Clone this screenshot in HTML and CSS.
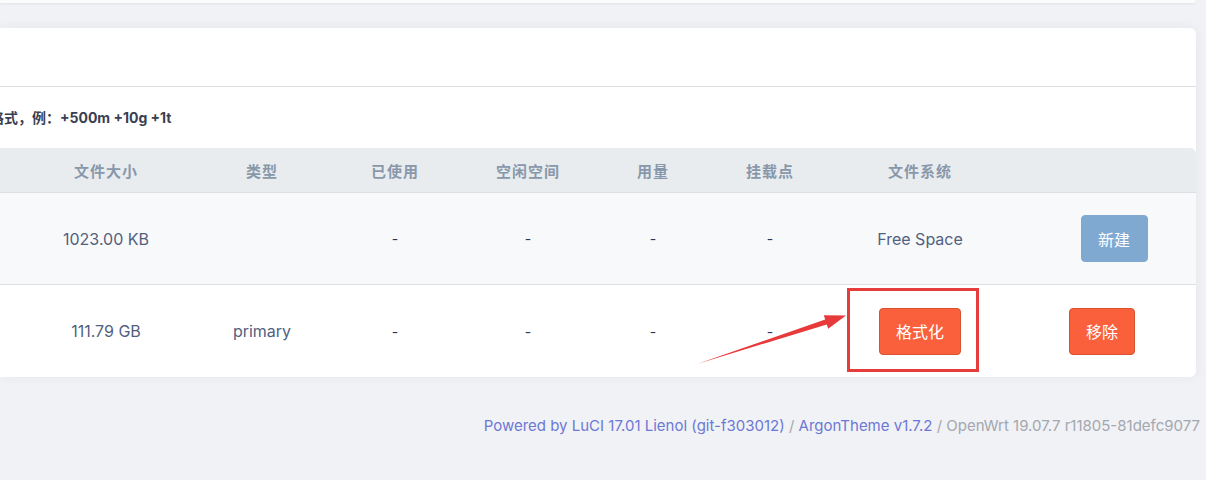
FILE: index.html
```html
<!DOCTYPE html>
<html lang="zh-CN">
<head>
<meta charset="utf-8">
<link rel="stylesheet" href="styles.css">
</head>
<body>
<div class="top-card"></div>
<div class="card">
  <div class="card-title"></div>
  <div class="card-desc"><span class="desc-text">格式，例：+500m +10g +1t</span></div>
  <div class="table">
    <div class="row head">
      <div class="c c-dev"></div>
      <div class="c c-size">文件大小</div>
      <div class="c c-type">类型</div>
      <div class="c c-used">已使用</div>
      <div class="c c-free">空闲空间</div>
      <div class="c c-usage">用量</div>
      <div class="c c-mount">挂载点</div>
      <div class="c c-fs">文件系统</div>
      <div class="c c-act"></div>
    </div>
    <div class="row data alt">
      <div class="c c-dev"></div>
      <div class="c c-size">1023.00 KB</div>
      <div class="c c-type"></div>
      <div class="c c-used dash">-</div>
      <div class="c c-free dash">-</div>
      <div class="c c-usage dash">-</div>
      <div class="c c-mount dash">-</div>
      <div class="c c-fs">Free Space</div>
      <div class="c c-act"><button class="btn btn-new">新建</button></div>
    </div>
    <div class="row data">
      <div class="c c-dev"></div>
      <div class="c c-size">111.79 GB</div>
      <div class="c c-type">primary</div>
      <div class="c c-used dash">-</div>
      <div class="c c-free dash">-</div>
      <div class="c c-usage dash">-</div>
      <div class="c c-mount dash">-</div>
      <div class="c c-fs"><button class="btn btn-danger btn-format">格式化</button></div>
      <div class="c c-act"><button class="btn btn-danger btn-remove">移除</button></div>
    </div>
  </div>
  <div class="mark-box"></div>
</div>
<footer class="footer">
  <a class="link">Powered by LuCI 17.01 Lienol (git-f303012)</a> / <a class="link">ArgonTheme v1.7.2</a> / OpenWrt 19.07.7 r11805-81defc9077
</footer>
<svg class="arrow" width="1206" height="480" viewBox="0 0 1206 480">
  <polygon points="697,364 825.2,319.6 823.8,315.3 846,315.5 828.2,328.7 826.8,324.4" fill="#e8393b"/>
</svg>
</body>
</html>
```

FILE: styles.css
```css
* { box-sizing: border-box; }
html, body { margin: 0; padding: 0; }
body {
  width: 1206px;
  height: 480px;
  overflow: hidden;
  background: #f1f2f5;
  font-family: Inter, "Noto Sans CJK SC", sans-serif;
  color: #525f7f;
  position: relative;
}
.top-card {
  width: 1196px;
  height: 3px;
  background: #fbfbfc;
  border-bottom-right-radius: 5px;
  box-shadow: 0 1px 3px rgba(50, 50, 93, 0.08);
}
.card {
  position: relative;
  margin-top: 25px;
  width: 1196px;
  height: 349px;
  background: #fff;
  border-radius: 0 6px 6px 0;
  box-shadow: 0 0 12px rgba(50, 50, 93, 0.06);
  overflow: hidden;
}
.card-title {
  height: 59px;
  border-bottom: 1px solid #dcdde0;
}
.card-desc {
  height: 61px;
  display: flex;
  align-items: center;
  overflow: hidden;
}
.desc-text {
  margin-left: -10px;
  padding-bottom: 2px;
  font-size: 14px;
  font-weight: 700;
  color: #3a3f51;
  font-family: Inter, "Noto Sans CJK SC", sans-serif;
}
.table { display: flex; flex-direction: column; }
.row { display: flex; align-items: center; }
.row.head {
  height: 45px;
  background: #e9ecef;
  border-top-right-radius: 6px;
  border-bottom: 1px solid #dcdfe3;
  font-size: 15px;
  letter-spacing: 1px;
  font-weight: 700;
  color: #8898aa;
  font-family: "Noto Sans CJK SC", sans-serif;
}
.row.data {
  height: 92px;
  font-size: 16px;
  color: #525f7f;
}
.row.data.alt {
  background: #f8f9fa;
  border-bottom: 1px solid #dee0e3;
}
.c { text-align: center; display: flex; justify-content: center; align-items: center; }
.c-dev { width: 28px; }
.c-size { width: 156px; }
.c-type { width: 156px; }
.c-used { width: 110px; }
.c-free { width: 156px; }
.c-usage { width: 94px; }
.c-mount { width: 140px; }
.c-fs { width: 160px; }
.c-act { width: 196px; }
.dash { color: #32325d; font-size: 14px; }
.btn {
  height: 47px;
  border: 1px solid transparent;
  border-radius: 4px;
  color: #fff;
  font-family: "Noto Sans CJK SC", sans-serif;
  font-size: 16px;
  padding: 0;
  cursor: pointer;
}
.btn-new {
  width: 67px;
  background: #80a9d2;
  border-color: #80a9d2;
  margin-left: 32px;
}
.btn-danger {
  background: #fb603d;
  border-color: #d9512f;
}
.btn-format { width: 82px; }
.btn-remove { width: 66px; margin-left: 8px; }
.mark-box {
  position: absolute;
  left: 847px;
  top: 260px;
  width: 132px;
  height: 84px;
  border: 3px solid #e53c3c;
}
.footer {
  padding-top: 39px;
  text-align: right;
  padding-right: 6px;
  font-size: 15px;
  color: #a3a7b0;
  white-space: nowrap;
}
.link { color: #6c78d6; text-decoration: none; }
.arrow {
  position: absolute;
  left: 0;
  top: 0;
  pointer-events: none;
}
```
